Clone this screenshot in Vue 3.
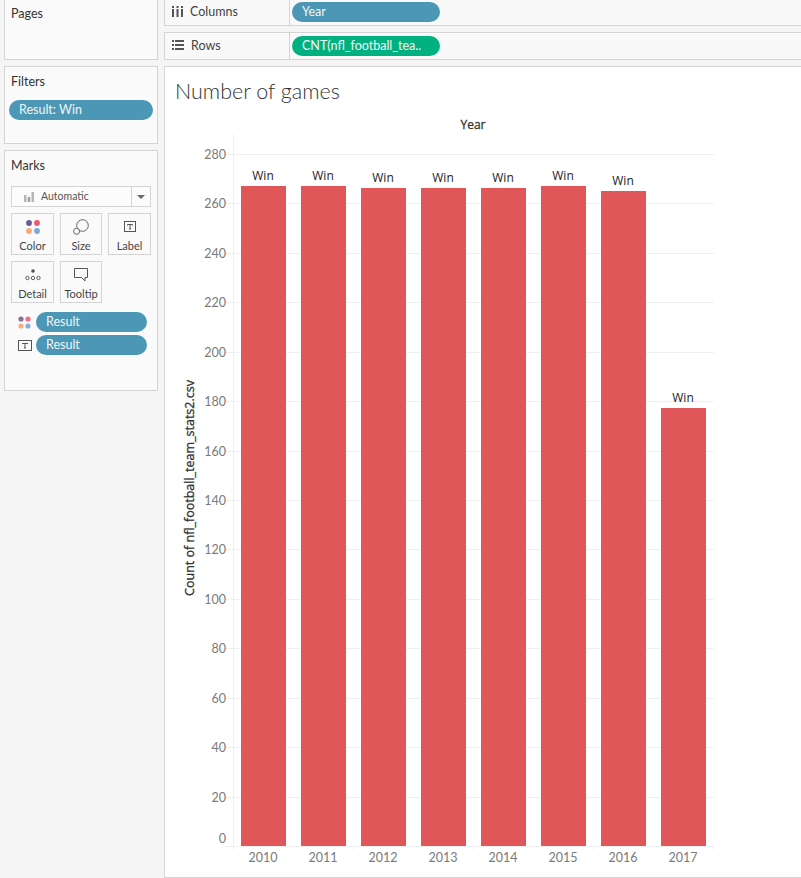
<script setup>
const years = [2010, 2011, 2012, 2013, 2014, 2015, 2016, 2017]
const values = [267, 267, 266, 266, 266, 267, 265, 177]
const ticks = [0, 20, 40, 60, 80, 100, 120, 140, 160, 180, 200, 220, 240, 260, 280]

// chart svg starts at x=165, y=67 on the page
const baseY = 779
const perUnit = 2.4714
const yOf = (v) => baseY - v * perUnit
const bars = values.map((v, i) => {
  const y = Math.floor(yOf(v))
  return { year: years[i], x: 76 + i * 60, y, h: baseY - y }
})
const tickLines = [68, 128, 188, 248, 308, 368, 428, 488, 548]
</script>

<template>
  <div class="page">
    <aside class="side">
      <section class="card pages">
        <h3>Pages</h3>
      </section>
      <section class="card filters">
        <h3>Filters</h3>
        <div class="pill blue filter-pill">Result: Win</div>
      </section>
      <section class="card marks">
        <h3>Marks</h3>
        <div class="mark-select">
          <svg class="bars-icon" width="10" height="10" viewBox="0 0 10 10">
            <rect x="0" y="3" width="2.5" height="7" fill="#b5b5b5" />
            <rect x="3.7" y="5" width="2.5" height="5" fill="#a0a0a0" />
            <rect x="7.5" y="0" width="2.5" height="10" fill="#b5b5b5" />
          </svg>
          <span class="mark-type">Automatic</span>
          <span class="caret-box"><i class="caret"></i></span>
        </div>
        <div class="mark-buttons">
          <div class="mark-btn">
            <svg width="16" height="16" viewBox="0 0 16 16">
              <circle cx="4" cy="4" r="2.9" fill="#6b5b95" />
              <circle cx="12" cy="4" r="2.9" fill="#f0596d" />
              <circle cx="4" cy="12" r="2.9" fill="#f5a878" />
              <circle cx="12" cy="12" r="2.9" fill="#7fa8d4" />
            </svg>
            <span>Color</span>
          </div>
          <div class="mark-btn">
            <svg width="16" height="16" viewBox="0 0 16 16" fill="none" stroke="#555" stroke-width="0.9">
              <circle cx="9.5" cy="6.5" r="5.8" fill="#fafafa" />
              <circle cx="3.6" cy="12.3" r="3" fill="#fafafa" />
            </svg>
            <span>Size</span>
          </div>
          <div class="mark-btn">
            <svg width="16" height="16" viewBox="0 0 16 16">
              <rect x="2.5" y="2.5" width="11" height="10" fill="none" stroke="#555" />
              <path d="M5.5 5.5h5M8 5.5v4.5M7 10h2M5.5 5.5v1M10.5 5.5v1" fill="none" stroke="#555" />
            </svg>
            <span>Label</span>
          </div>
          <div class="mark-btn">
            <svg width="16" height="16" viewBox="0 0 16 16" fill="none" stroke="#555" stroke-width="0.9">
              <circle cx="8" cy="4" r="1.8" fill="#555" stroke="none" />
              <circle cx="2.5" cy="11" r="1.7" />
              <circle cx="8" cy="11" r="1.7" />
              <circle cx="13.5" cy="11" r="1.7" />
            </svg>
            <span>Detail</span>
          </div>
          <div class="mark-btn">
            <svg width="16" height="16" viewBox="0 0 16 16" fill="none" stroke="#555" stroke-width="1">
              <path d="M1.5 1.5h13v9h-2.5v3.5l-3.5-3.5h-7z" />
            </svg>
            <span>Tooltip</span>
          </div>
        </div>
        <div class="mark-row">
          <svg width="13" height="13" viewBox="0 0 13 13">
            <circle cx="3" cy="3" r="2.6" fill="#85709c" />
            <circle cx="10" cy="3" r="2.6" fill="#f0707f" />
            <circle cx="3" cy="10" r="2.6" fill="#f5ad85" />
            <circle cx="10" cy="10" r="2.6" fill="#8aaed6" />
          </svg>
          <div class="pill blue">Result</div>
        </div>
        <div class="mark-row">
          <svg width="14" height="11" viewBox="0 0 14 11">
            <rect x="0.5" y="0.5" width="13" height="10" fill="none" stroke="#555" />
            <path d="M4 3.5h6M7 3.5v4.5M6 8h2" fill="none" stroke="#555" />
          </svg>
          <div class="pill blue">Result</div>
        </div>
      </section>
    </aside>

    <main class="main">
      <div class="shelf shelf-columns">
        <div class="shelf-label">
          <svg width="11" height="11" viewBox="0 0 11 11" fill="#555">
            <rect x="0" y="0" width="2" height="2" />
            <rect x="0" y="3" width="2" height="8" />
            <rect x="4.5" y="0" width="2" height="2" />
            <rect x="4.5" y="3" width="2" height="8" />
            <rect x="9" y="0" width="2" height="2" />
            <rect x="9" y="3" width="2" height="8" />
          </svg>
          <span>Columns</span>
        </div>
        <div class="shelf-body"><div class="pill blue shelf-pill">Year</div></div>
      </div>
      <div class="shelf shelf-rows">
        <div class="shelf-label">
          <svg width="12" height="10" viewBox="0 0 12 10" fill="#555">
            <rect x="0" y="0" width="2" height="2" />
            <rect x="3" y="0" width="9" height="2" />
            <rect x="0" y="4" width="2" height="2" />
            <rect x="3" y="4" width="9" height="2" />
            <rect x="0" y="8" width="2" height="2" />
            <rect x="3" y="8" width="9" height="2" />
          </svg>
          <span>Rows</span>
        </div>
        <div class="shelf-body"><div class="pill green shelf-pill">CNT(nfl_football_tea..</div></div>
      </div>

      <div class="viz">
        <h1 class="viz-title">Number of games</h1>
        <svg class="chart" width="636" height="809" viewBox="0 0 636 809">
          <text class="axis-title" x="308" y="62" text-anchor="middle">Year</text>

          <line x1="68.5" y1="67" x2="68.5" y2="779" class="grid" />
          <line
            v-for="t in ticks"
            :key="t"
            x1="61"
            :y1="Math.round(yOf(t)) + 0.5"
            x2="549"
            :y2="Math.round(yOf(t)) + 0.5"
            class="grid"
          />
          <text
            v-for="t in ticks"
            :key="'l' + t"
            class="tick"
            x="61"
            :y="t === 0 ? yOf(t) - 3 : yOf(t) + 5"
            text-anchor="end"
          >{{ t }}</text>

          <line
            v-for="x in tickLines"
            :key="x"
            :x1="x + 0.5"
            y1="779"
            :x2="x + 0.5"
            y2="783"
            class="grid"
          />

          <g v-for="b in bars" :key="b.year">
            <rect :x="b.x" :y="b.y" width="45" :height="b.h" fill="#e15759" />
            <text class="mark-label" :x="b.x + 22" :y="b.y - 6" text-anchor="middle">Win</text>
            <text class="tick" :x="b.x + 22" y="795" text-anchor="middle">{{ b.year }}</text>
          </g>

          <text
            class="axis-title rotated"
            transform="translate(29 421) rotate(-90)"
            text-anchor="middle"
          >Count of nfl_football_team_stats2.csv</text>
        </svg>
      </div>
    </main>
  </div>
</template>

<style>
html,
body {
  margin: 0;
  background: #f5f5f5;
  overflow: hidden;
}
</style>

<style scoped>
.page {
  display: flex;
  gap: 6px;
  width: 801px;
  height: 878px;
  padding-left: 4px;
  box-sizing: border-box;
  overflow: hidden;
  background: #f5f5f5;
  font-family: Lato, "Open Sans", sans-serif;
  font-size: 12.5px;
  color: #333;
}

.side {
  width: 154px;
  flex: none;
  display: flex;
  flex-direction: column;
  gap: 6px;
  margin-top: -1px;
}

.card {
  box-sizing: border-box;
  background: #fafafa;
  border: 1px solid #d4d4d4;
  padding: 0 6px;
  position: relative;
}

.card h3 {
  margin: 0;
  font-size: 12.5px;
  font-weight: 400;
  line-height: 16px;
  color: #333;
}

.pages {
  height: 61px;
  padding-top: 6px;
}

.filters {
  height: 78px;
  padding-top: 7px;
}

.marks {
  height: 241px;
  padding-top: 7px;
}

.pill {
  height: 20px;
  line-height: 20px;
  border-radius: 10px;
  color: #f2f6f8;
  box-sizing: border-box;
  padding-left: 10px;
  white-space: nowrap;
  overflow: hidden;
}

.blue {
  background: #4b97b5;
}

.green {
  background: #00b180;
}

.filter-pill {
  margin: 10px 0 0 -2px;
  width: 144px;
}

.mark-select {
  margin-top: 12px;
  height: 21px;
  width: 140px;
  box-sizing: border-box;
  border: 1px solid #d4d4d4;
  background: #fcfcfc;
  display: flex;
  align-items: center;
  font-size: 10.5px;
  line-height: 17px;
  color: #555;
}

.bars-icon {
  margin-left: 12px;
}

.mark-type {
  margin-left: 7px;
  flex: 1;
}

.caret-box {
  width: 18px;
  height: 100%;
  border-left: 1px solid #d4d4d4;
  display: flex;
  align-items: center;
  justify-content: center;
}

.caret {
  width: 0;
  height: 0;
  border-left: 4px solid transparent;
  border-right: 4px solid transparent;
  border-top: 4px solid #666;
}

.mark-buttons {
  margin-top: 6px;
  display: grid;
  grid-template-columns: 43px 42px 43px;
  column-gap: 6px;
  row-gap: 6px;
  width: 140px;
}

.mark-btn {
  box-sizing: border-box;
  height: 42px;
  border: 1px solid #d4d4d4;
  display: flex;
  flex-direction: column;
  align-items: center;
  padding-top: 5px;
  font-size: 11px;
  color: #444;
}

.mark-btn span {
  margin-top: 4px;
  line-height: 14px;
}

.mark-row {
  display: flex;
  align-items: center;
  height: 20px;
  margin-top: 3px;
}

.mark-buttons + .mark-row {
  margin-top: 9px;
}

.mark-row svg {
  flex: none;
  margin-left: 7px;
}

.mark-row .pill {
  position: absolute;
  left: 31px;
  width: 111px;
}

.main {
  flex: 1;
  min-width: 0;
  display: flex;
  flex-direction: column;
  margin-top: -1px;
}

.shelf {
  box-sizing: border-box;
  display: flex;
  background: #f9f9f9;
  border: 1px solid #d4d4d4;
  border-right: none;
}

.shelf-columns {
  height: 27px;
}

.shelf-rows {
  margin-top: 6px;
  height: 28px;
}

.shelf-label {
  width: 125px;
  flex: none;
  box-sizing: border-box;
  border-right: 1px solid #d4d4d4;
  display: flex;
  align-items: center;
  gap: 7px;
  padding: 0 0 2px 7px;
  color: #444;
}

.shelf-body {
  padding: 2px 0 0 2px;
}

.shelf-rows .shelf-body {
  padding-top: 3px;
}

.shelf-pill {
  width: 148px;
}

.viz {
  box-sizing: border-box;
  margin-top: 6px;
  height: 812px;
  background: #fff;
  border: 1px solid #d4d4d4;
  border-right: none;
  position: relative;
}

.viz-title {
  margin: 0;
  position: absolute;
  left: 10px;
  top: 10px;
  font-size: 21.5px;
  font-weight: 300;
  line-height: 28px;
  color: #333;
}

.chart {
  display: block;
}

.grid {
  stroke: #f0f0f0;
  stroke-width: 1;
}

.tick {
  font-size: 12.5px;
  fill: #7a7a7a;
}

.mark-label {
  font-family: "Open Sans", Lato, sans-serif;
  font-size: 12px;
  fill: #222;
}

.axis-title {
  font-family: "Open Sans", Lato, sans-serif;
  font-size: 12px;
  font-weight: 500;
  fill: #333;
  stroke: #333;
  stroke-width: 0.3px;
}

.rotated {
  font-size: 12.5px;
}
</style>
